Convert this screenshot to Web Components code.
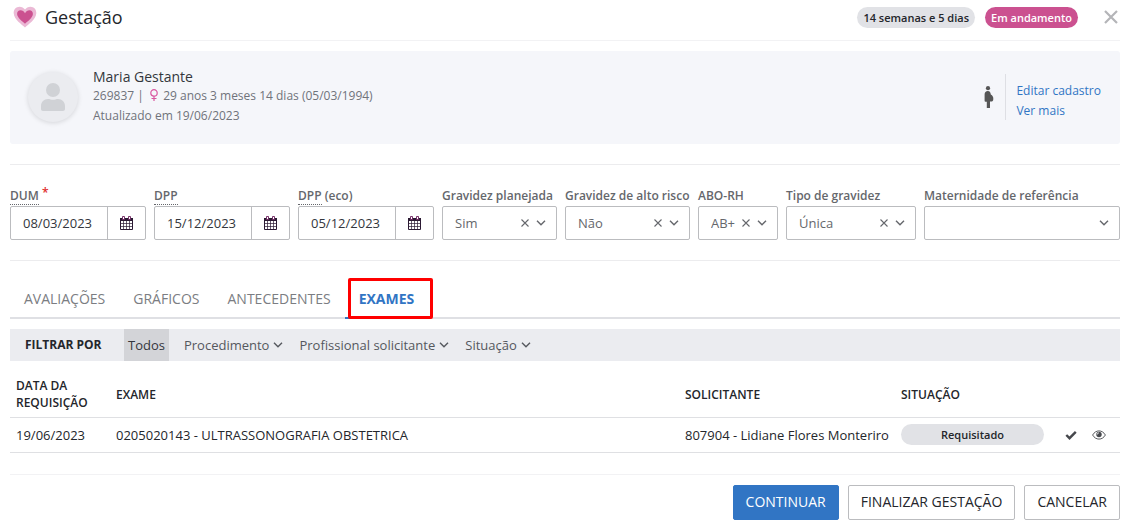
<!DOCTYPE html>
<html lang="pt-BR">
<head>
<meta charset="utf-8">
<meta name="viewport" content="width=device-width, initial-scale=1">
<title>Gestação</title>
<style>
  body {
    margin: 0;
    background: #fff;
    color: #24262b;
    font: 13px/20px "Open Sans", "Noto Sans", sans-serif;
    --blue: #3175c4;
    --pink: #cb5190;
    --pill: #e1e2e6;
    --line: #ececee;
    --border: #bbbcbf;
    --muted: #70737a;
  }
</style>
</head>
<body>
<gestation-page></gestation-page>

<script>
const define = (name, html, setup) => {
  const template = document.createElement('template');
  template.innerHTML = html;
  customElements.define(name, class extends HTMLElement {
    constructor() {
      super();
      this.attachShadow({ mode: 'open' }).append(template.content.cloneNode(true));
    }
    connectedCallback() {
      if (setup && !this.ready) {
        this.ready = true;
        setup(this, this.shadowRoot);
      }
    }
  });
};

const icons = {
  heart: [24, 22, '<path d="M12 21.5C9 18.5 1 13.5.7 7.2.4 3.500 3.200.7 6.500.7c2.300 0 4.300 1.100 5.500 2.800C13.200 1.800 15.200.7 17.500.7c3.300 0 6.100 2.800 5.800 6.500C23 13.500 15 18.500 12 21.500z" fill="#ebb9d5"/><path d="M12 17.800C9.500 15.300 4.300 12 4.100 8 4 5.800 5.500 4.300 7.500 4.300c2 0 3.500 1.200 4.500 3 1-1.800 2.500-3 4.500-3s3.500 1.500 3.400 3.700c-.2 4-5.400 7.300-7.900 9.800z" fill="#cb5190"/>'],
  close: [14, 14, '<path d="M1 1l12 12M13 1L1 13" stroke="currentColor" stroke-width="2.200" fill="none"/>'],
  clear: [8, 8, '<path d="M.5.5l7 7M7.500.5l-7 7" stroke="currentColor" stroke-width="1.100" fill="none"/>'],
  chevron: [10, 6, '<path d="M1 .8l4 4 4-4" stroke="currentColor" stroke-width="1.400" fill="none"/>'],
  user: [24, 28, '<circle cx="12" cy="7" r="7" fill="currentColor"/><path d="M0 26v-3c0-4 3-7 7-7 2 0 3 .8 5 .8s3-.8 5-.8c4 0 7 3 7 7v3c0 1.200-.8 2-2 2H2c-1.200 0-2-.8-2-2z" fill="currentColor"/>'],
  female: [8, 12, '<circle cx="4" cy="3.900" r="3.200" stroke="currentColor" stroke-width="1.200" fill="none"/><path d="M4 7v5M1.500 9.500h5" stroke="currentColor" stroke-width="1.200"/>'],
  pregnant: [10, 22, '<circle cx="4" cy="2.200" r="2.100" fill="currentColor"/><path d="M3.800 5C6 5 6.500 6.500 6.800 8.500 8.600 9.500 9.500 11 9.300 13c0 1.800-.8 2.600-2.300 2.600H6V22H2.800v-6.200H1.500c-.6 0-.9-.4-.9-1V8.500C.6 6.300 1.800 5 3.800 5z" fill="currentColor"/>'],
  calendar: [14, 14, '<path d="M.5 2.500h12v11H.5z" fill="#fff" stroke="#2b1a33"/><path d="M0 2h13v3H0z" fill="#2b1a33"/><path d="M3.500 5v8.500M6.500 5v8.500M9.500 5v8.500M.5 7.500h12M.5 10.500h12" stroke="#2b1a33" stroke-width=".7"/><path d="M2.500.5h2v3h-2zM8.500.5h2v3h-2z" fill="#fff" stroke="#6b1f5c" stroke-width=".9"/>'],
  check: [12, 10, '<path d="M1.300 5l3.200 3.200L10.800 1.800" stroke="currentColor" stroke-width="2.400" fill="none"/>'],
  eye: [14, 10, '<path d="M.6 5C2.200 2.300 4.400.9 7 .9S11.800 2.300 13.400 5C11.800 7.700 9.600 9.100 7 9.100S2.200 7.700.6 5z" stroke="currentColor" stroke-width=".9" fill="none"/><circle cx="7" cy="4.500" r="2.700" fill="currentColor"/><path d="M5.300 4.500A1.700 1.700 0 0 1 7 2.800" stroke="#fff" stroke-width=".8" fill="none"/>']
};

define('ui-icon', `<style>
  :host { display: inline-flex; flex: none; }
  svg { display: block; }
</style>`, (el, root) => {
  const [w, h, body] = icons[el.getAttribute('name')];
  root.innerHTML += `<svg width="${w}" height="${h}" viewBox="0 0 ${w} ${h}" aria-hidden="true">${body}</svg>`;
});

define('status-pill', `<style>
  :host {
    display: flex; align-items: center; justify-content: center;
    box-sizing: border-box; height: 21px; padding: 0 6px; border-radius: 11px;
    background: var(--pill); color: #24262b;
    font-size: 11px; font-weight: 600; line-height: 21px; white-space: nowrap;
  }
  :host([tone="pink"]) { background: var(--pink); color: #fff; }
</style><slot></slot>`);

define('page-header', `<style>
  :host {
    display: flex; align-items: center; gap: 10px;
    box-sizing: border-box; height: 41px; padding: 0 2px 6px 3px;
    border-bottom: 1px solid #f2f2f4;
  }
  h1 { flex: 1; margin: 0 0 0 -2px; font-size: 18px; line-height: 24px; font-weight: 400; }
  button { display: flex; margin-left: 16px; padding: 0; border: 0; background: none; color: #b4b5b8; }
</style>
<ui-icon name="heart"></ui-icon>
<h1><slot></slot></h1>
<slot name="status"></slot>
<button type="button" aria-label="Fechar"><ui-icon name="close"></ui-icon></button>`);

define('patient-card', `<style>
  :host {
    display: flex; align-items: center;
    box-sizing: border-box; min-height: 93px; padding: 16px 19px 18px 18px;
    border-radius: 3px; background: #f5f6fa; color: var(--muted);
    font-size: 12px;
  }
  .avatar {
    display: grid; place-items: center; flex: none;
    width: 50px; height: 50px; border-radius: 50%;
    background: #ebecf0; color: #d0d2d6; box-shadow: 0 1px 5px #0002;
  }
  .data { flex: 1; margin-left: 15px; }
  h2 { margin: 0; color: #33363c; font-size: 14px; line-height: 18px; font-weight: 400; }
  p { margin: 0; }
  .sex { margin: 0 2px 0 3px; color: #d957a0; vertical-align: -1px; }
  .pregnant { color: #565656; }
  nav {
    display: flex; flex-direction: column; height: 39px; padding: 7px 0 0 10px;
    margin-left: 11px; border-left: 1px solid #dedfe4;
  }
  a { color: var(--blue); text-decoration: none; }
</style>
<div class="avatar"><ui-icon name="user"></ui-icon></div>
<div class="data">
  <h2><slot name="name"></slot></h2>
  <p><slot name="record"></slot> | <ui-icon class="sex" name="female"></ui-icon> <slot name="age"></slot></p>
  <p><slot name="updated"></slot></p>
</div>
<ui-icon class="pregnant" name="pregnant"></ui-icon>
<nav><a href="#editar">Editar cadastro</a><a href="#ver">Ver mais</a></nav>`);

const fieldCss = `
  :host { display: block; min-width: 0; color: #65676c; }
  label { display: block; height: 19px; font-size: 12px; font-weight: 600; line-height: 18px; white-space: nowrap; }
  .box { box-sizing: border-box; height: 34px; border: 1px solid var(--border); border-radius: 2px; background: #fff; }
  button { padding: 0; border: 0; background: none; color: inherit; }`;

define('date-field', `<style>${fieldCss}
  abbr { text-decoration: none; border-bottom: 1px dotted #65676c; }
  sup { color: #e02b2b; font-size: 12px; line-height: 0; vertical-align: 3px; }
  .box { display: flex; }
  input {
    flex: 1; min-width: 0; padding: 0 0 0 12px; border: 0; background: none;
    font: inherit; color: #33363c;
  }
  button { display: grid; place-items: center; flex: none; width: 38px; border-left: 1px solid var(--border); }
</style>
<label for="date"></label>
<div class="box"><input id="date" type="text"><button type="button" aria-label="Abrir calendário"><ui-icon name="calendar"></ui-icon></button></div>`, (el, root) => {
  const note = el.getAttribute('note');
  root.querySelector('label').innerHTML = `<abbr>${el.getAttribute('label')}</abbr>` +
    (note ? ` ${note}` : '') + (el.hasAttribute('required') ? ' <sup>*</sup>' : '');
  root.querySelector('input').value = el.getAttribute('value');
});

define('select-field', `<style>${fieldCss}
  .box { display: grid; grid-template-columns: 1fr auto auto; align-items: center; }
  select {
    grid-area: 1 / 1 / 2 / 4; width: 100%; height: 32px; padding: 0 40px 0 12px;
    appearance: none; border: 0; background: none; font: inherit; color: inherit;
  }
  button { display: flex; grid-area: 1 / 2; margin-right: 7px; }
  .arrow { grid-area: 1 / 3; margin-right: 10px; pointer-events: none; }
  :host([compact]) select { padding-right: 30px; }
</style>
<label for="choice"></label>
<div class="box">
  <select id="choice"></select>
  <button type="button" aria-label="Limpar"><ui-icon name="clear"></ui-icon></button>
  <ui-icon class="arrow" name="chevron"></ui-icon>
</div>`, (el, root) => {
  const select = root.querySelector('select');
  const clear = root.querySelector('button');
  const value = el.getAttribute('value') || '';
  root.querySelector('label').textContent = el.getAttribute('label');
  select.add(new Option(value, value));
  if (!value) clear.remove();
  clear.onclick = () => { select.selectedIndex = -1; };
});

define('tab-bar', `<style>
  :host { display: flex; box-sizing: border-box; height: 39px; border-bottom: 2px solid #dfe0e4; }
</style><slot></slot>`);

define('tab-item', `<style>
  :host { display: flex; position: relative; height: 39px; }
  button {
    padding: 0 14px; border: 0; border-bottom: 2px solid transparent; background: none;
    color: #7b7d82; font: inherit; font-size: 14px;
  }
  :host([selected]) button { border-color: var(--blue); color: var(--blue); font-weight: 700; }
  .mark { display: none; }
  :host([selected]) .mark {
    display: block; position: absolute; inset: -2px -5px 0 3px;
    border: 3px solid #f00; border-radius: 2px; pointer-events: none;
  }
</style><button type="button"><slot></slot></button><span class="mark"></span>`);

define('filter-bar', `<style>
  :host { display: flex; height: 32px; padding-left: 15px; background: #ebecf0; }
  strong { width: 99px; font-size: 12px; font-weight: 700; line-height: 31px; white-space: nowrap; }
</style><strong>FILTRAR POR</strong><slot></slot>`);

define('filter-item', `<style>
  :host { display: flex; margin-right: 8px; }
  button {
    display: flex; align-items: center; gap: 4px; padding: 0 4px;
    border: 0; background: none; color: #55585e; font: inherit; white-space: nowrap;
  }
  :host([selected]) { margin-right: 11px; }
  :host([selected]) button { background: #d3d4d8; color: #33363c; }
  :host([selected]) ui-icon { display: none; }
</style><button type="button"><slot></slot><ui-icon name="chevron"></ui-icon></button>`);

define('exam-table', `<style>
  :host { display: block; }
  table { width: 100%; border-collapse: collapse; table-layout: fixed; }
  th, td { padding: 0 6px; border-bottom: 1px solid #dfe0e3; text-align: left; }
  th { height: 56px; padding-top: 11px; box-sizing: border-box; font-size: 12px; line-height: 17px; font-weight: 600; }
  td { height: 34px; white-space: nowrap; }
  .actions { display: flex; align-items: center; gap: 15px; padding-left: 9px; }
  button { display: flex; padding: 0; border: 0; background: none; color: #46484d; }
</style>
<table>
  <colgroup><col style="width:100px"><col><col style="width:216px"><col style="width:155px"><col style="width:70px"></colgroup>
  <thead><tr><th>DATA DA REQUISIÇÃO</th><th>EXAME</th><th>SOLICITANTE</th><th>SITUAÇÃO</th><th></th></tr></thead>
  <tbody><tr>
    <td>19/06/2023</td>
    <td>0205020143 - ULTRASSONOGRAFIA OBSTETRICA</td>
    <td>807904 - Lidiane Flores Monteriro</td>
    <td><status-pill>Requisitado</status-pill></td>
    <td><div class="actions">
      <button type="button" aria-label="Confirmar"><ui-icon name="check"></ui-icon></button>
      <button type="button" aria-label="Visualizar"><ui-icon name="eye"></ui-icon></button>
    </div></td>
  </tr></tbody>
</table>`);

define('action-button', `<style>
  :host { display: block; }
  button {
    height: 35px; padding: 0 12px; border: 1px solid var(--border); border-radius: 2px;
    background: #fff; color: #24262b; font: inherit; font-size: 14px; white-space: nowrap;
  }
  :host([primary]) button { border-color: var(--blue); background: var(--blue); color: #fff; }
</style><button type="button"><slot></slot></button>`);

define('gestation-page', `<style>
  :host { display: block; padding: 0 10px 6px; }
  patient-card { margin: 10px 0 20px; }
  form {
    display: grid; gap: 8px; padding: 22px 0 20px; margin: 0 0 19px;
    grid-template-columns:
      minmax(0, 136fr) minmax(0, 136fr) minmax(0, 136fr) minmax(0, 115fr)
      minmax(0, 125fr) minmax(0, 80fr) minmax(0, 130fr) minmax(0, 196fr);
    border: solid var(--line); border-width: 1px 0;
  }
  filter-bar { margin-top: 10px; }
  footer {
    display: flex; justify-content: flex-end; gap: 9px;
    margin-top: 21px; padding-top: 10px; border-top: 1px solid #f2f2f4;
  }
</style>
<page-header>Gestação
  <status-pill slot="status">14 semanas e 5 dias</status-pill>
  <status-pill slot="status" tone="pink">Em andamento</status-pill>
</page-header>
<main>
  <patient-card>
    <span slot="name">Maria Gestante</span>
    <span slot="record">269837</span>
    <span slot="age">29 anos 3 meses 14 dias (05/03/1994)</span>
    <span slot="updated">Atualizado em 19/06/2023</span>
  </patient-card>
  <form>
    <date-field label="DUM" value="08/03/2023" required></date-field>
    <date-field label="DPP" value="15/12/2023"></date-field>
    <date-field label="DPP" note="(eco)" value="05/12/2023"></date-field>
    <select-field label="Gravidez planejada" value="Sim"></select-field>
    <select-field label="Gravidez de alto risco" value="Não"></select-field>
    <select-field label="ABO-RH" value="AB+" compact></select-field>
    <select-field label="Tipo de gravidez" value="Única"></select-field>
    <select-field label="Maternidade de referência"></select-field>
  </form>
  <tab-bar>
    <tab-item>AVALIAÇÕES</tab-item>
    <tab-item>GRÁFICOS</tab-item>
    <tab-item>ANTECEDENTES</tab-item>
    <tab-item selected>EXAMES</tab-item>
  </tab-bar>
  <filter-bar>
    <filter-item selected>Todos</filter-item>
    <filter-item>Procedimento</filter-item>
    <filter-item>Profissional solicitante</filter-item>
    <filter-item>Situação</filter-item>
  </filter-bar>
  <exam-table></exam-table>
</main>
<footer>
  <action-button primary>CONTINUAR</action-button>
  <action-button>FINALIZAR GESTAÇÃO</action-button>
  <action-button>CANCELAR</action-button>
</footer>`);
</script>
</body>
</html>
